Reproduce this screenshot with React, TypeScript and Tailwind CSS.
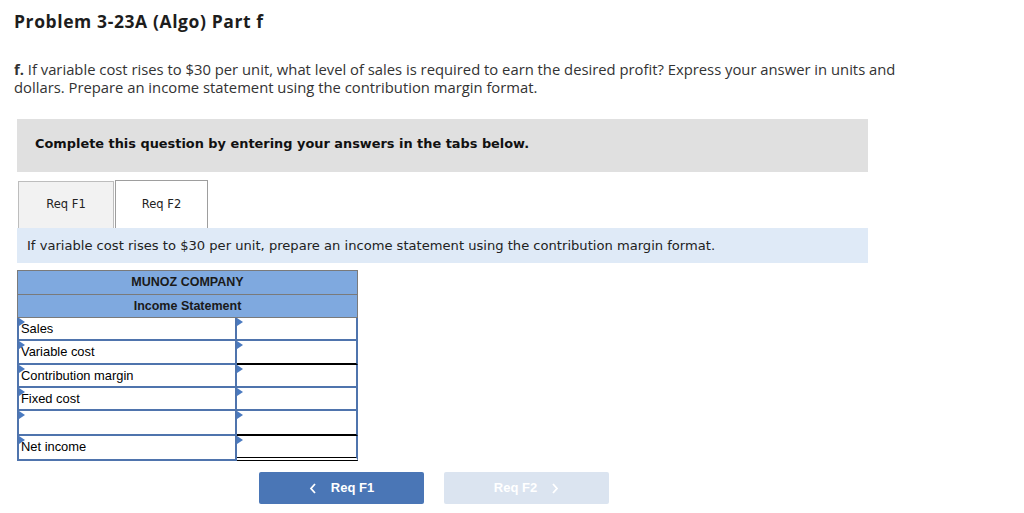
import React from 'react';

// Small blue marker that sits in the top-left corner of each answer cell
const CellMark: React.FC = () => (
    <span className="absolute left-0 top-0 w-0 h-0 border-t-[4px] border-b-[4px] border-l-[6px] border-t-transparent border-b-transparent border-l-[#4a7ac0]" />
);

type Row = { label: string; under?: 'single' | 'double' };

const ROWS: Row[] = [
    { label: 'Sales' },
    { label: 'Variable cost', under: 'single' },
    { label: 'Contribution margin' },
    { label: 'Fixed cost' },
    { label: '', under: 'single' },
    { label: 'Net income', under: 'double' },
];

const StatementRow: React.FC<{ row: Row; tall?: boolean }> = ({ row, tall }) => {
    const underline =
        row.under === 'single'
            ? 'border-b-2 border-b-black'
            : row.under === 'double'
            ? 'border-b-[4px] border-double border-b-black'
            : '';
    return (
        <div className={`flex ${tall ? 'h-[25px]' : 'h-[23.3px]'}`}>
            <div className="relative w-[220px] border-2 border-[#4f74ad] border-t-0 bg-white pl-[2px] pt-[1px] text-[12.9px] leading-[20px] text-black">
                <CellMark />
                {row.label}
            </div>
            <div className={`relative flex-1 border-2 border-l-0 border-t-0 border-[#4f74ad] bg-white ${underline}`}>
                <CellMark />
            </div>
        </div>
    );
};

const App: React.FC = () => {
    return (
        <div className="w-[1024px] h-[513px] bg-white overflow-hidden">
            <div className="px-[14px] pt-[9px]" style={{ fontFamily: '"Open Sans", Lato, sans-serif' }}>
                <h1 className="text-[17.5px] font-bold tracking-[0.6px] text-[#1d1d1d] leading-[24px]">
                    Problem 3-23A (Algo) Part f
                </h1>
                <p className="mt-[27px] w-[900px] text-[14.8px] leading-[18px] text-[#333]">
                    <b>f.</b> If variable cost rises to $30 per unit, what level of sales is required to earn the desired profit? Express your answer in units and dollars. Prepare an income statement using the contribution margin format.
                </p>
            </div>

            <div className="ml-[17px] w-[851px]" style={{ fontFamily: '"DejaVu Sans", Verdana, sans-serif' }}>
                <div className="mt-[23px] h-[53px] bg-[#e0e0e0] flex items-center pl-[18px]">
                    <span className="text-[12.9px] font-bold text-[#111] -mt-[4px]">Complete this question by entering your answers in the tabs below.</span>
                </div>

                <div className="mt-[8px] flex items-end h-[48px]">
                    <div className="w-[96px] h-[47px] ml-[1px] bg-[#f2f2f2] border border-[#bdbdbd] border-b-0 flex items-center justify-center text-[11.5px] text-[#222]">
                        Req F1
                    </div>
                    <div className="w-[93px] h-[48px] ml-[1px] bg-white border border-[#9e9e9e] border-b-0 flex items-center justify-center text-[11.5px] text-[#222]">
                        Req F2
                    </div>
                </div>

                <div className="h-[35px] bg-[#dfeaf7] flex items-center pl-[10px] text-[13.1px] text-[#222]">
                    If variable cost rises to $30 per unit, prepare an income statement using the contribution margin format.
                </div>
            </div>

            <div className="ml-[17px] mt-[7px] w-[341px]" style={{ fontFamily: '"Liberation Sans", Arial, sans-serif' }}>
                <div className="border border-[#7a7a7a] bg-[#7fa9df]">
                    <div className="h-[24px] flex items-center justify-center text-[12.5px] font-bold text-[#1a1a1a] border-b border-[#7a7a7a]">
                        MUNOZ COMPANY
                    </div>
                    <div className="h-[22px] flex items-center justify-center text-[12.5px] font-bold text-[#1a1a1a]">
                        Income Statement
                    </div>
                </div>
                {ROWS.map((row, i) => (
                    <StatementRow key={i} row={row} tall={i >= 4} />
                ))}
            </div>

            <div className="mt-[11px] ml-[259px] flex gap-[20px]" style={{ fontFamily: '"Liberation Sans", Arial, sans-serif' }}>
                <button className="w-[165px] h-[32px] rounded-[2px] bg-[#4a76b6] text-white text-[13px] font-bold flex items-center justify-center gap-[14px]">
                    <svg width="8" height="11" viewBox="0 0 8 11" fill="none" stroke="white" strokeWidth="1.8">
                        <path d="M6 1 L2 5.5 L6 10" />
                    </svg>
                    Req F1
                </button>
                <button className="w-[165px] h-[32px] rounded-[2px] bg-[#dbe4f0] text-white text-[13px] font-bold flex items-center justify-center gap-[14px]">
                    Req F2
                    <svg width="8" height="11" viewBox="0 0 8 11" fill="none" stroke="white" strokeWidth="1.8">
                        <path d="M2 1 L6 5.5 L2 10" />
                    </svg>
                </button>
            </div>
        </div>
    );
};

export default App;
